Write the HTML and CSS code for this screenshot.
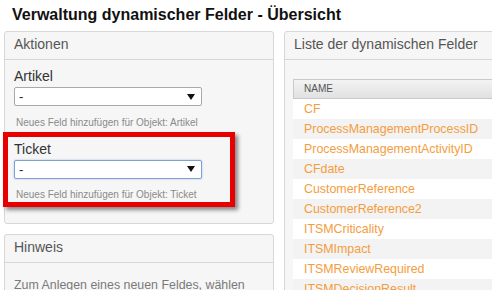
FILE: index.html
```html
<!DOCTYPE html>
<html lang="de">
<head>
<meta charset="utf-8">
<title>Verwaltung dynamischer Felder - Übersicht</title>
<link rel="stylesheet" href="styles.css">
</head>
<body>
<div class="page">
  <h1 class="title">Verwaltung dynamischer Felder - Übersicht</h1>
  <div class="layout">
    <div class="sidebar">
      <section class="panel">
        <h2 class="panel-head">Aktionen</h2>
        <div class="panel-body fields">
          <div class="field">
            <label class="field-label">Artikel</label>
            <div class="select"><span class="select-value">-</span><svg class="select-arrow" width="8" height="6" viewBox="0 0 8 6"><polygon points="0,0 8,0 4,6" fill="#111"/></svg></div>
            <p class="hint">Neues Feld hinzufügen für Objekt: Artikel</p>
          </div>
          <div class="field field-marked">
            <label class="field-label">Ticket</label>
            <div class="select select-focus"><span class="select-value">-</span><svg class="select-arrow" width="8" height="6" viewBox="0 0 8 6"><polygon points="0,0 8,0 4,6" fill="#111"/></svg></div>
            <p class="hint">Neues Feld hinzufügen für Objekt: Ticket</p>
          </div>
        </div>
      </section>
      <section class="panel">
        <h2 class="panel-head">Hinweis</h2>
        <div class="panel-body note">
          <p class="note-text">Zum Anlegen eines neuen Feldes, wählen</p>
        </div>
      </section>
    </div>
    <div class="main">
      <section class="panel">
        <h2 class="panel-head">Liste der dynamischen Felder</h2>
        <div class="panel-body list-body">
          <div class="grid">
            <div class="grid-head">NAME</div>
            <div class="grid-row">CF</div>
            <div class="grid-row">ProcessManagementProcessID</div>
            <div class="grid-row">ProcessManagementActivityID</div>
            <div class="grid-row">CFdate</div>
            <div class="grid-row">CustomerReference</div>
            <div class="grid-row">CustomerReference2</div>
            <div class="grid-row">ITSMCriticality</div>
            <div class="grid-row">ITSMImpact</div>
            <div class="grid-row">ITSMReviewRequired</div>
            <div class="grid-row">ITSMDecisionResult</div>
          </div>
        </div>
      </section>
    </div>
  </div>
</div>
</body>
</html>
```
FILE: styles.css
```css
html, body {
  margin: 0;
  padding: 0;
  background: #fff;
  overflow: hidden;
}
body {
  width: 492px;
  height: 290px;
  font-family: "Liberation Sans", Arial, sans-serif;
  color: #333;
}
.page {
  padding: 5px 0 0 4px;
}
.title {
  margin: 0 0 6px 8px;
  font-size: 16px;
  line-height: 20px;
  font-weight: bold;
  color: #111;
  white-space: nowrap;
}
.layout {
  display: flex;
  align-items: flex-start;
  gap: 10px;
}
.sidebar {
  flex: none;
  width: 270px;
  display: flex;
  flex-direction: column;
  gap: 10px;
}
.main {
  flex: none;
  width: 330px;
}
.panel {
  border: 1px solid #d7d7d7;
  border-radius: 3px;
  background: #f6f6f6;
}
.panel-head {
  margin: 0;
  padding: 4px 9px 6px;
  font-size: 14px;
  line-height: 17px;
  font-weight: normal;
  color: #555;
  border-bottom: 1px solid #d7d7d7;
  white-space: nowrap;
}
.panel-body {
  padding: 8px 9px 22px;
}
.fields {
  display: flex;
  flex-direction: column;
  gap: 12px;
}
.field {
  position: relative;
}
.field-label {
  display: block;
  font-size: 14px;
  line-height: 17px;
  color: #333;
}
.select {
  box-sizing: border-box;
  margin-top: 2px;
  width: 188px;
  height: 19px;
  display: flex;
  align-items: center;
  justify-content: space-between;
  padding: 0 6px 0 4px;
  background: #fff;
  border: 1px solid #a9a9a9;
  border-radius: 2px;
}
.select-focus {
  border-color: #7e9fd8;
  box-shadow: 0 0 2px rgba(90, 130, 210, 0.5);
}
.select-value {
  font-size: 13px;
  line-height: 15px;
  color: #222;
}
.select-arrow {
  display: block;
}
.hint {
  margin: 10.5px 0 0 2px;
  font-size: 10px;
  line-height: 12px;
  color: #8a8a8a;
  white-space: nowrap;
}
.field-marked::after {
  content: "";
  position: absolute;
  top: -9px;
  left: -11px;
  width: 222px;
  height: 65px;
  border: 5px solid #e80000;
  box-shadow: 3px 3px 4px rgba(0, 0, 0, 0.45);
  pointer-events: none;
}
.note {
  padding-top: 14px;
}
.note-text {
  margin: 0;
  font-size: 12.4px;
  line-height: 17px;
  color: #7a7a7a;
  white-space: nowrap;
}
.list-body {
  padding: 19px 0 0 8px;
}
.grid {
  background: #fff;
}
.grid-head {
  box-sizing: border-box;
  height: 20px;
  padding-left: 10px;
  font-size: 10px;
  line-height: 18px;
  color: #555;
  background: linear-gradient(#f3f3f3, #e1e1e1);
  border: 1px solid #c9c9c9;
  border-right: none;
}
.grid-row {
  height: 20px;
  padding-left: 11px;
  font-size: 12.4px;
  line-height: 20px;
  color: #f59d3d;
  background: #fff;
  white-space: nowrap;
}
.grid-row:nth-of-type(odd) {
  background: #f3f3f3;
}
```
